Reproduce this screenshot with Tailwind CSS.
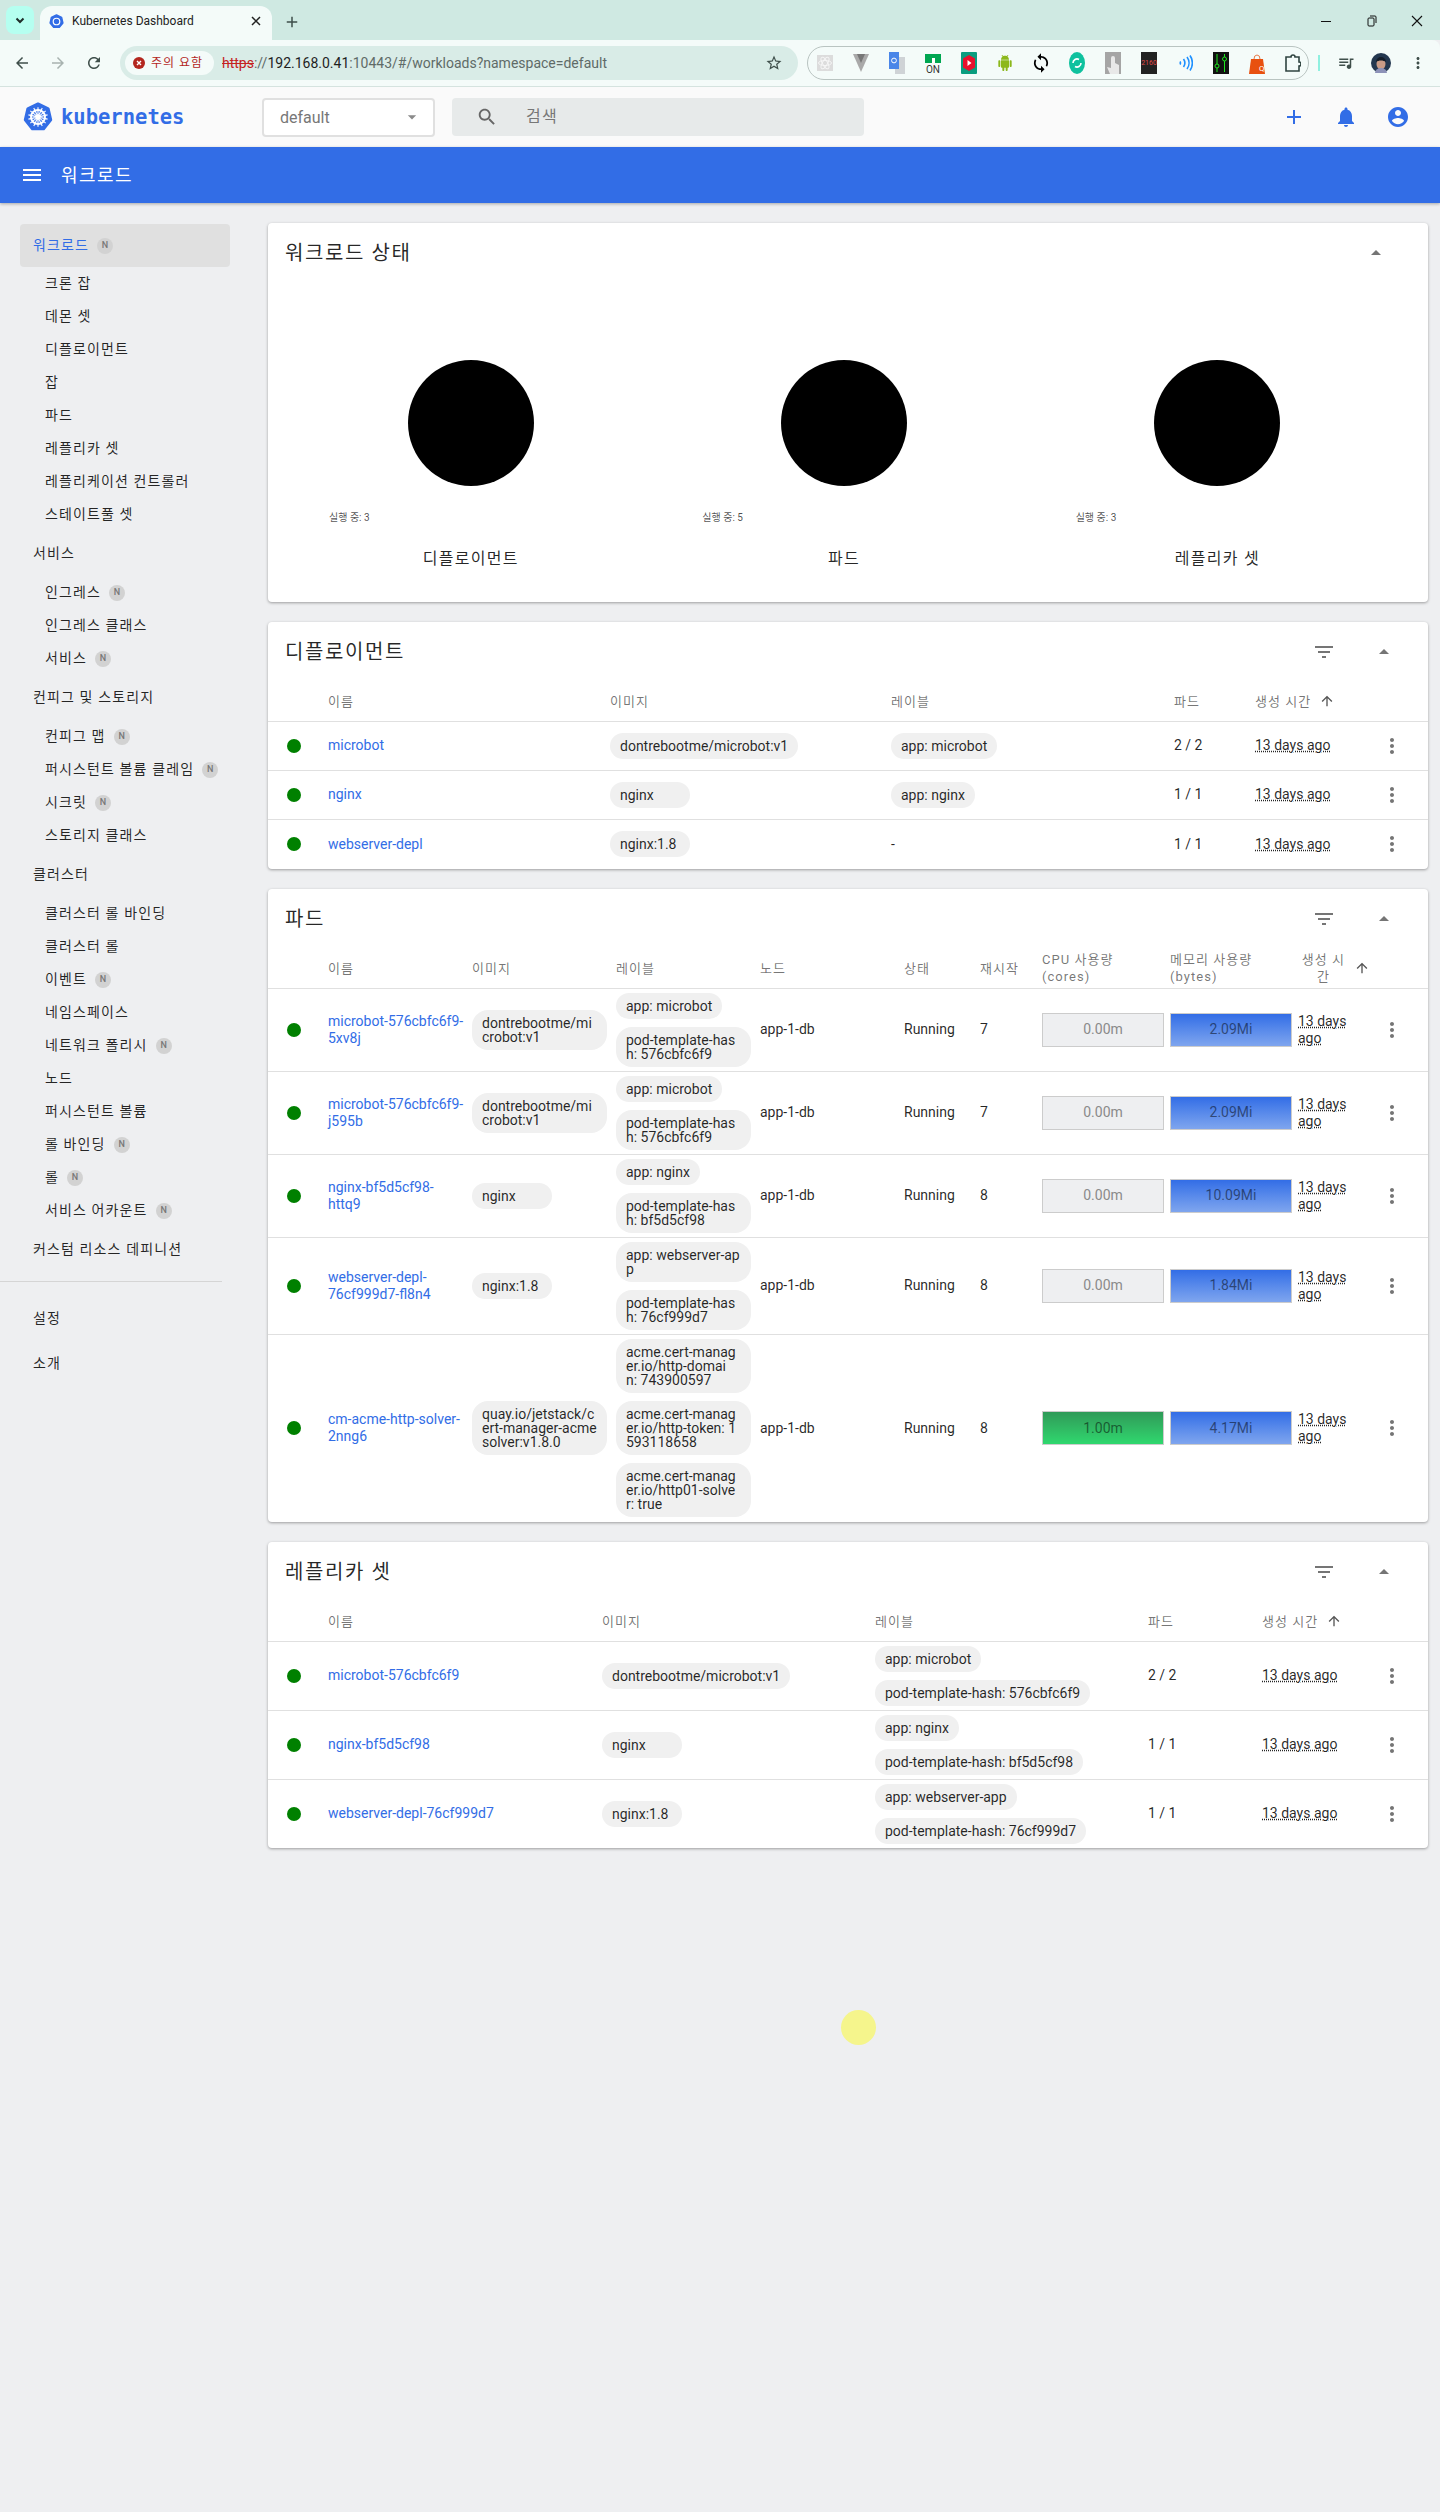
<!DOCTYPE html>
<html lang="ko">
<head>
    <meta charset="UTF-8">
    <title>Kubernetes Dashboard</title>
    <script src="https://cdn.jsdelivr.net/npm/@tailwindcss/browser@4"></script>
</head>
<body class="bg-[#eeeff1] font-[Roboto,'Noto_Sans_CJK_KR',sans-serif] text-[14px] text-black/85">
<div class="relative w-[1440px] h-[2512px] overflow-hidden">

    <!-- browser tab strip -->
    <div class="h-10 bg-[#cfe9e2] flex items-end pl-1.5">
        <div class="w-7 h-7 mb-1.5 rounded-lg bg-[#b5fff0] flex items-center justify-center">
            <svg class="w-3 h-3" viewBox="0 0 24 24" fill="none" stroke="#1f2d2a" stroke-width="4"><path d="M5 9l7 7 7-7"/></svg>
        </div>
        <div class="ml-1.5 w-[232px] h-[34px] bg-[#f4fbf9] rounded-t-xl flex items-center pl-[9px] pb-1">
            <svg class="w-[15px] h-[17px]" viewBox="0 0 32 32"><polygon points="16,2 26.95,7.27 29.65,19.11 22.07,28.61 9.93,28.61 2.35,19.11 5.05,7.27" fill="#326de6" stroke="#326de6" stroke-width="3" stroke-linejoin="round"/><circle cx="16" cy="16" r="7" fill="none" stroke="#fff" stroke-width="2.5"/></svg>
            <span class="ml-2 text-[12px] text-[#222]">Kubernetes Dashboard</span>
            <svg class="w-3 h-3 ml-auto mr-2.5" viewBox="0 0 12 12" stroke="#222" stroke-width="1.5"><path d="M2 2l8 8M10 2l-8 8"/></svg>
        </div>
        <svg class="w-[18px] h-[18px] ml-[11px] mb-[9px]" viewBox="0 0 24 24" fill="#3f4f4b"><path d="M19 13h-6v6h-2v-6H5v-2h6V5h2v6h6v2z"/></svg>
        <div class="ml-auto self-start mt-3.5 flex items-center">
            <svg class="w-3 h-3" viewBox="0 0 12 12" stroke="#111"><path d="M1 6.5h10"/></svg>
            <svg class="w-3 h-3 ml-[34px]" viewBox="0 0 12 12" fill="none" stroke="#111"><rect x="2" y="3" width="6" height="8" rx="1"/><path d="M4 1h5a1 1 0 0 1 1 1v6"/></svg>
            <svg class="w-3.5 h-3.5 ml-[32px] mr-4" viewBox="0 0 14 14" stroke="#111" stroke-width="1.1"><path d="M2 2l10 10M12 2L2 12"/></svg>
        </div>
    </div>

    <!-- browser toolbar -->
    <div class="h-[47px] bg-[#f4fbf9] border-b border-[#d5e3df] rounded-tr-lg flex items-center pl-[13px]">
        <svg class="w-[18px] h-[18px]" viewBox="0 0 24 24" fill="#3f4f4b"><path d="M20 11H7.83l5.59-5.59L12 4l-8 8 8 8 1.41-1.41L7.83 13H20v-2z"/></svg>
        <svg class="w-[18px] h-[18px] ml-[18px]" viewBox="0 0 24 24" fill="#a8b3b0"><path d="M12 4l-1.41 1.41L16.17 11H4v2h12.17l-5.58 5.59L12 20l8-8z"/></svg>
        <svg class="w-[18px] h-[18px] ml-[18px]" viewBox="0 0 24 24" fill="#3f4f4b"><path d="M17.65 6.35C16.2 4.9 14.21 4 12 4c-4.42 0-7.99 3.58-7.99 8s3.57 8 7.99 8c3.73 0 6.84-2.55 7.73-6h-2.08c-.82 2.33-3.04 4-5.65 4-3.31 0-6-2.69-6-6s2.69-6 6-6c1.66 0 3.14.69 4.22 1.78L13 11h7V4l-2.35 2.35z"/></svg>
        <div class="ml-[17px] w-[678px] h-[34px] rounded-full bg-[#d9ece7] flex items-center pl-[5px] pr-[15px]">
            <div class="w-[89px] h-6 rounded-full bg-[#f4fbf9] flex items-center pl-2 shrink-0">
                <svg class="w-3 h-3" viewBox="0 0 12 12"><circle cx="6" cy="6" r="6" fill="#b3261e"/><path d="M4 4l4 4M8 4l-4 4" stroke="#fff" stroke-width="1.4"/></svg>
                <span class="ml-1.5 text-[12px] tracking-[0.08em] text-[#b3261e] whitespace-nowrap">주의 요함</span>
            </div>
            <div class="ml-2 text-[14px] text-[#5f6b68] whitespace-nowrap"><span class="text-[#c5221f] line-through">https</span>://<span class="text-[#1f1f1f]">192.168.0.41</span>:10443/#/workloads?namespace=default</div>
            <svg class="w-[18px] h-[18px] ml-auto" viewBox="0 0 24 24" fill="#3f4f4b"><path d="M22 9.24l-7.19-.62L12 2 9.19 8.63 2 9.24l5.46 4.73L5.82 21 12 17.27 18.18 21l-1.63-7.03L22 9.24zM12 15.4l-3.76 2.27 1-4.28-3.32-2.88 4.38-.38L12 6.1l1.71 4.04 4.38.38-3.32 2.88 1 4.28L12 15.4z"/></svg>
        </div>
        <div class="ml-[9px] w-[502px] h-[34px] rounded-full border border-[#b9c4c1] flex items-center pl-[9px] gap-5">
            <svg class="w-4 h-4" viewBox="0 0 16 16"><rect width="16" height="16" fill="#dcdcdc"/><g fill="none" stroke="#f5f5f5"><ellipse cx="8" cy="8" rx="6.5" ry="2.5"/><ellipse cx="8" cy="8" rx="6.5" ry="2.5" transform="rotate(60 8 8)"/><ellipse cx="8" cy="8" rx="6.5" ry="2.5" transform="rotate(120 8 8)"/></g></svg>
            <svg class="w-4 h-5" viewBox="0 0 16 20"><path d="M0 1h16L8 19z" fill="#a9a9a9"/><path d="M4 1h8L8 10z" fill="#777"/></svg>
            <svg class="w-4 h-[22px]" viewBox="0 0 16 22"><rect x="6" y="5" width="10" height="17" fill="#cfd3d6"/><rect width="10" height="17" fill="#4a86e8"/><circle cx="5" cy="8.5" r="2.4" fill="none" stroke="#fff"/></svg>
            <div class="w-4 h-[22px] relative flex flex-col items-center mt-1">
                <div class="w-4 h-[9px] bg-[#00a651] flex justify-center"><div class="w-[3px] h-[5px] mt-1 bg-white"></div></div>
                <span class="text-[10px] leading-[13px] text-[#333]">ON</span>
            </div>
            <svg class="w-4 h-[22px]" viewBox="0 0 16 22"><rect width="16" height="22" rx="1" fill="#0a9d7f"/><polygon points="8,3 14,6.5 14,15.5 8,19 2,15.5 2,6.5" fill="#e8112d"/><path d="M6.5 8l4 3-4 3z" fill="#fff"/></svg>
            <svg class="w-4 h-[18px]" viewBox="0 0 24 24" fill="#8cb81c"><path d="M6 18c0 .55.45 1 1 1h1v3.5c0 .83.67 1.5 1.5 1.5s1.5-.67 1.5-1.5V19h2v3.5c0 .83.67 1.5 1.5 1.5s1.5-.67 1.5-1.5V19h1c.55 0 1-.45 1-1V8H6v10zM3.5 8C2.67 8 2 8.67 2 9.5v7c0 .83.67 1.5 1.5 1.5S5 17.33 5 16.5v-7C5 8.67 4.33 8 3.5 8zm17 0c-.83 0-1.5.67-1.5 1.5v7c0 .83.67 1.5 1.5 1.5s1.5-.67 1.5-1.5v-7c0-.83-.67-1.5-1.5-1.5zm-4.97-5.84l1.3-1.3c.2-.2.2-.51 0-.71-.2-.2-.51-.2-.71 0l-1.48 1.48C13.85 1.23 12.95 1 12 1c-.96 0-1.86.23-2.66.63L7.85.15c-.2-.2-.51-.2-.71 0-.2.2-.2.51 0 .71l1.31 1.31C6.97 3.26 6 5.01 6 7h12c0-1.99-.97-3.75-2.47-4.84z"/></svg>
            <svg class="w-4 h-[22px]" viewBox="3 0 18 24" fill="#000"><path d="M12 4V1L8 5l4 4V6c3.31 0 6 2.69 6 6 0 1.01-.25 1.97-.7 2.8l1.46 1.46C19.54 15.03 20 13.57 20 12c0-4.42-3.58-8-8-8zm0 14c-3.31 0-6-2.69-6-6 0-1.01.25-1.97.7-2.8L5.24 7.74C4.46 8.97 4 10.43 4 12c0 4.42 3.58 8 8 8v3l4-4-4-4v3z"/></svg>
            <svg class="w-4 h-[22px]" viewBox="0 0 16 22"><ellipse cx="8" cy="11" rx="8" ry="11" fill="#0fc19e"/><path d="M4 11a4 4 0 0 1 6-3.5M12 11a4 4 0 0 1-6 3.5" fill="none" stroke="#fff" stroke-width="1.6"/></svg>
            <svg class="w-4 h-[22px]" viewBox="0 0 16 22"><rect width="16" height="22" fill="#a5a5a5"/><path d="M6 6a2 2 0 0 1 4 0v5l4 2v9H5l-3-7 4 1z" fill="#e8e8e8"/></svg>
            <div class="w-4 h-[22px] bg-[#222] flex items-center justify-center overflow-hidden"><span class="text-[7px] text-[#e04a4a]">2160</span></div>
            <svg class="w-4 h-[18px]" viewBox="0 0 16 18" fill="none" stroke="#1e90ff" stroke-width="1.6"><path d="M3 7.5a3 3 0 0 1 0 3M6.5 5a7 7 0 0 1 0 8M10 3a10 10 0 0 1 0 12M13 1.5a13 13 0 0 1 0 15"/></svg>
            <svg class="w-4 h-[22px]" viewBox="0 0 16 22"><rect width="16" height="22" fill="#111"/><path d="M4 2v18M11.5 2v18" stroke="#1ee61e"/><circle cx="4" cy="14" r="2" fill="#111" stroke="#1ee61e"/><circle cx="11.5" cy="7" r="2" fill="#111" stroke="#1ee61e"/></svg>
            <svg class="w-4 h-[22px]" viewBox="0 0 16 22"><path d="M5 7a3 4 0 0 1 6 0" fill="none" stroke="#e87b4a"/><path d="M2 7h12l2 15H0z" fill="#e8500f"/><text x="10" y="19" font-size="8" fill="#fff">Q</text></svg>
            <svg class="w-4 h-[18px]" viewBox="0 0 16 18" fill="none" stroke="#2f4440" stroke-width="1.6"><path d="M1 3h5a2 2 0 0 1 4 0h4v5a2 2 0 0 1 0 4v5H1z"/></svg>
        </div>
        <div class="ml-[9px] w-[2px] h-4 bg-[#8ff0e0]"></div>
        <svg class="ml-[17px] w-[18px] h-[18px]" viewBox="0 0 24 24" fill="#3f4f4b"><path d="M15 6H3v2h12V6zm0 4H3v2h12v-2zM3 16h8v-2H3v2zM17 6v8.18c-.31-.11-.65-.18-1-.18-1.66 0-3 1.34-3 3s1.34 3 3 3 3-1.34 3-3V8h3V6h-5z"/></svg>
        <svg class="ml-4 w-5 h-5" viewBox="0 0 20 20"><circle cx="10" cy="10" r="10" fill="#23374f"/><ellipse cx="10" cy="11" rx="4.5" ry="5.5" fill="#c99b86"/><path d="M5 9a5 5 0 0 1 10 0c-3-2-7-2-10 0z" fill="#141d29"/><path d="M4 20a6 5 0 0 1 12 0z" fill="#8d92b8"/></svg>
        <svg class="ml-[18px] w-[18px] h-[18px]" viewBox="0 0 24 24" fill="#3f4f4b"><path d="M12 8c1.1 0 2-.9 2-2s-.9-2-2-2-2 .9-2 2 .9 2 2 2zm0 2c-1.1 0-2 .9-2 2s.9 2 2 2 2-.9 2-2-.9-2-2-2zm0 6c-1.1 0-2 .9-2 2s.9 2 2 2 2-.9 2-2-.9-2-2-2z"/></svg>
    </div>

    <!-- dashboard nav -->
    <div class="h-[60px] bg-[#fafafa] flex items-center pl-[23px] pr-[30px]">
        <svg class="w-[30px] h-[30px]" viewBox="0 0 32 32">
            <polygon points="16,2 26.95,7.27 29.65,19.11 22.07,28.61 9.93,28.61 2.35,19.11 5.05,7.27" fill="#326de6" stroke="#326de6" stroke-width="3" stroke-linejoin="round"/>
            <g fill="none" stroke="#fff"><circle cx="16" cy="16" r="7.5" stroke-width="2"/><path d="M16 5.5v21M7.8 9.5l16.4 13M5.8 18.3l20.4-4.6M11.5 25.5l9-19M20.5 25.5l-9-19M26.2 18.3L5.8 13.7M24.2 9.5L7.8 22.5" stroke-width="1.2"/></g>
            <circle cx="16" cy="16" r="2" fill="#fff"/>
        </svg>
        <span class="ml-2 w-[113px] font-['DejaVu_Sans_Mono',monospace] font-bold text-[20.5px] text-[#326de6]">kubernetes</span>
        <div class="ml-[88px] w-[173px] h-[39px] bg-white border-2 border-[#e0e0e0] rounded-sm flex items-center pl-4 pr-[11px] text-[16px] text-[#777]">
            <span class="pt-0.5">default</span>
            <svg class="w-5 h-5 ml-auto" viewBox="0 0 24 24" fill="#8a8a8a"><path d="M7 10l5 5 5-5z"/></svg>
        </div>
        <div class="ml-[17px] w-[412px] h-[38px] bg-[#e7eaea] rounded-sm flex items-center pl-6 text-[16px] text-[#777]">
            <svg class="w-[22px] h-[22px]" viewBox="0 0 24 24" fill="#666"><path d="M15.5 14h-.79l-.28-.27C15.41 12.59 16 11.11 16 9.5 16 5.91 13.09 3 9.5 3S3 5.91 3 9.5 5.91 16 9.5 16c1.61 0 3.09-.59 4.23-1.57l.27.28v.79l5 4.99L20.49 19l-4.99-5zm-6 0C7.01 14 5 11.99 5 9.5S7.01 5 9.5 5 14 7.01 14 9.5 11.99 14 9.5 14z"/></svg>
            <span class="ml-[28px] tracking-[0.08em]">검색</span>
        </div>
        <svg class="w-6 h-6 ml-auto" viewBox="0 0 24 24" fill="#326de6"><path d="M19 13h-6v6h-2v-6H5v-2h6V5h2v6h6v2z"/></svg>
        <svg class="w-6 h-6 ml-7" viewBox="0 0 24 24" fill="#326de6"><path d="M12 22c1.1 0 2-.9 2-2h-4c0 1.1.89 2 2 2zm6-6v-5c0-3.07-1.64-5.64-4.5-6.32V4c0-.83-.67-1.5-1.5-1.5s-1.5.67-1.5 1.5v.68C7.63 5.36 6 7.92 6 11v5l-2 2v1h16v-1l-2-2z"/></svg>
        <svg class="w-6 h-6 ml-7" viewBox="0 0 24 24" fill="#326de6"><path d="M12 2C6.48 2 2 6.48 2 12s4.48 10 10 10 10-4.48 10-10S17.52 2 12 2zm0 3c1.66 0 3 1.34 3 3s-1.34 3-3 3-3-1.34-3-3 1.34-3 3-3zm0 14.2c-2.5 0-4.71-1.28-6-3.22.03-1.99 4-3.08 6-3.08 1.99 0 5.97 1.09 6 3.08-1.29 1.94-3.5 3.22-6 3.22z"/></svg>
    </div>

    <!-- blue title bar -->
    <div class="h-14 bg-[#326de6] flex items-center pl-5 text-white shadow-[0_1px_3px_rgba(0,0,0,.3)]">
        <svg class="w-6 h-6" viewBox="0 0 24 24" fill="#fff"><path d="M3 18h18v-2H3v2zm0-5h18v-2H3v2zm0-7v2h18V6H3z"/></svg>
        <span class="ml-[17px] text-[18px] tracking-[0.08em]">워크로드</span>
    </div>

    <div class="flex">
        <aside class="w-[256px] shrink-0 pt-[21px] text-[14px] tracking-[0.08em]">
            <div id="sidebar"></div>
            <div class="w-[222px] h-px bg-[#d5d5d5] mt-[9px]"></div>
            <div class="mt-3.5 h-[45px] pl-[33px] flex items-center">설정</div>
            <div class="h-[45px] pl-[33px] flex items-center">소개</div>
        </aside>

        <main class="w-[1160px] pt-5 ml-3 flex flex-col gap-5">
            <section class="bg-white rounded shadow-[0_1px_3px_rgba(0,0,0,.35)]">
                <div class="h-[60px] flex items-center pl-[17px] pr-10">
                    <h2 class="text-[20px] tracking-[0.08em]">워크로드 상태</h2>
                    <svg class="w-6 h-6 ml-auto" viewBox="0 0 24 24" fill="#757575"><path d="M7 14l5-5 5 5z"/></svg>
                </div>
                <div id="charts" class="flex pl-4 pr-6 pb-[35px]"></div>
            </section>
            <section id="deployments"></section>
            <section id="pods"></section>
            <section id="replicasets"></section>
        </main>
    </div>

    <!-- mouse highlight -->
    <div class="absolute left-[841px] top-[2010px] w-[35px] h-[35px] rounded-full bg-[#f5f58c]"></div>
</div>

<script>
    const sidebar = [
        ['워크로드', true, [['크론 잡'], ['데몬 셋'], ['디플로이먼트'], ['잡'], ['파드'], ['레플리카 셋'], ['레플리케이션 컨트롤러'], ['스테이트풀 셋']]],
        ['서비스', false, [['인그레스', 1], ['인그레스 클래스'], ['서비스', 1]]],
        ['컨피그 및 스토리지', false, [['컨피그 맵', 1], ['퍼시스턴트 볼륨 클레임', 1], ['시크릿', 1], ['스토리지 클래스']]],
        ['클러스터', false, [['클러스터 롤 바인딩'], ['클러스터 롤'], ['이벤트', 1], ['네임스페이스'], ['네트워크 폴리시', 1], ['노드'], ['퍼시스턴트 볼륨'], ['롤 바인딩', 1], ['롤', 1], ['서비스 어카운트', 1]]],
        ['커스텀 리소스 데피니션', false, []]
    ];

    const badge = '<span class="ml-2 w-4 h-4 rounded-full bg-[#d2d2d2] text-[9px] tracking-normal font-medium text-[#777] flex items-center justify-center">N</span>';

    document.getElementById('sidebar').innerHTML = sidebar.map(([title, active, items], i) => {
        const head = active
            ? `<div class="h-[43px] ml-5 w-[210px] pl-[13px] bg-[#e0e0e0] rounded-sm flex items-center text-[#326de6]">${title}${badge}</div>`
            : `<div class="h-[45px] pl-[33px] flex items-center">${title}</div>`;
        const subs = items.map(([name, n]) => `<div class="h-[33px] pl-[45px] flex items-center">${name}${n ? badge : ''}</div>`).join('');
        return head + subs;
    }).join('');

    document.getElementById('charts').innerHTML = [['실행 중: 3', '디플로이먼트'], ['실행 중: 5', '파드'], ['실행 중: 3', '레플리카 셋']].map(([run, label]) => `
        <div class="flex-1 flex flex-col items-center">
            <div class="mt-[77px] w-[126px] h-[126px] rounded-full bg-black"></div>
            <div class="self-start ml-[45px] mt-[26px] h-3 text-[10px] leading-3 text-black/70">${run}</div>
            <div class="mt-[27px] h-4 text-[16px] leading-4 tracking-[0.08em]">${label}</div>
        </div>`).join('');

    const upArrow = '<svg class="w-4 h-4 ml-[8px] shrink-0" viewBox="0 0 24 24" fill="#555"><path d="M4 12l1.41 1.41L11 7.83V20h2V7.83l5.58 5.59L20 12l-8-8-8 8z"/></svg>';
    const moreIcon = '<svg class="w-6 h-6 ml-auto" viewBox="0 0 24 24" fill="#757575"><path d="M12 8c1.1 0 2-.9 2-2s-.9-2-2-2-2 .9-2 2 .9 2 2 2zm0 2c-1.1 0-2 .9-2 2s.9 2 2 2 2-.9 2-2-.9-2-2-2zm0 6c-1.1 0-2 .9-2 2s.9 2 2 2 2-.9 2-2-.9-2-2-2z"/></svg>';

    const dot = '<div class="ml-[19px] w-3.5 h-3.5 rounded-full bg-[#008000]"></div>';
    const link = t => `<a class="text-[#326de6] leading-[17px] block">${t}</a>`;
    const chip = t => `<div class="w-fit min-w-20 max-w-full box-border px-2.5 py-1.5 rounded-2xl bg-[#f0f0f0] text-[14px] leading-3.5 break-all">${t}</div>`;
    const chips = (list, cls) => `<div class="flex flex-col gap-2 items-start ${cls}">${list.map(chip).join('')}</div>`;
    const age = '<span class="underline decoration-dotted underline-offset-1 leading-[17px] block">13 days ago</span>';
    const more = `<div class="flex pr-6">${moreIcon}</div>`;
    const head = t => `<span class="text-[13px] tracking-[0.08em] text-black/55">${t}</span>`;
    const idleBar = t => `<div class="w-[122px] h-[34px] border border-[#ccc] bg-[#eeeff1] text-[#8a8a8a] flex items-center justify-center">${t}</div>`;
    const memBar = t => `<div class="w-[122px] h-[34px] border border-[#ccc] bg-linear-to-b from-[#326de6] to-[#7fa5ee] text-black/50 flex items-center justify-center">${t}</div>`;
    const cpuBar = t => `<div class="w-[122px] h-[34px] border border-[#ccc] bg-linear-to-b from-[#2f9a58] to-[#2fd86e] text-black/50 flex items-center justify-center">${t}</div>`;

    function card(id, title, cols, heads, rows) {
        document.getElementById(id).className = 'bg-white rounded shadow-[0_1px_3px_rgba(0,0,0,.35)]';
        document.getElementById(id).innerHTML = `
            <div class="h-[60px] flex items-center pl-[17px] pr-8">
                <h2 class="text-[20px] tracking-[0.08em]">${title}</h2>
                <svg class="w-6 h-6 ml-auto" viewBox="0 0 24 24" fill="#757575"><path d="M10 18h4v-2h-4v2zM3 6v2h18V6H3zm3 7h12v-2H6v2z"/></svg>
                <svg class="w-6 h-6 ml-9" viewBox="0 0 24 24" fill="#757575"><path d="M7 14l5-5 5 5z"/></svg>
            </div>
            <table class="w-full table-fixed">
                <colgroup>${cols.map(c => `<col class="${c}">`).join('')}</colgroup>
                <thead><tr class="h-[39px] border-b border-[#e0e0e0] text-left">${heads.map(h => `<th class="p-0 font-normal leading-[17px]">${h}</th>`).join('')}</tr></thead>
                <tbody>${rows}</tbody>
            </table>`;
    }

    const sortHead = `<div class="flex items-center">${head('생성 시간')}${upArrow}</div>`;

    // deployments
    card('deployments', '디플로이먼트',
        ['w-[60px]', 'w-[282px]', 'w-[281px]', 'w-[283px]', 'w-[81px]', 'w-[115px]', 'w-[58px]'],
        ['', head('이름'), head('이미지'), head('레이블'), head('파드'), sortHead, ''],
        [['microbot', 'dontrebootme/microbot:v1', 'app: microbot', '2 / 2'],
         ['nginx', 'nginx', 'app: nginx', '1 / 1'],
         ['webserver-depl', 'nginx:1.8', null, '1 / 1']].map(([name, img, label, pods]) => `
            <tr class="h-[49px] last:h-[50px] border-b border-[#e0e0e0] last:border-b-0">
                <td class="p-0">${dot}</td>
                <td class="p-0">${link(name)}</td>
                <td class="p-0">${chips([img], '')}</td>
                <td class="p-0">${label ? chips([label], '') : '-'}</td>
                <td class="p-0">${pods}</td>
                <td class="p-0">${age}</td>
                <td class="p-0">${more}</td>
            </tr>`).join(''));

    // pods
    card('pods', '파드',
        ['w-[60px]', 'w-[144px]', 'w-[144px]', 'w-[144px]', 'w-[144px]', 'w-[76px]', 'w-[62px]', 'w-[128px]', 'w-[128px]', 'w-[72px]', 'w-[58px]'],
        ['', head('이름'), head('이미지'), head('레이블'), head('노드'), head('상태'), head('재시작'),
         head('CPU 사용량<br>(cores)'), head('메모리 사용량<br>(bytes)'),
         `<div class="flex items-center"><div class="w-[52px] text-center">${head('생성 시간')}</div><div class="-ml-[3px]">${upArrow}</div></div>`, ''],
        [['microbot-576cbfc6f9-<br>5xv8j', 'dontrebootme/microbot:v1', ['app: microbot', 'pod-template-hash: 576cbfc6f9'], '7', idleBar('0.00m'), memBar('2.09Mi')],
         ['microbot-576cbfc6f9-<br>j595b', 'dontrebootme/microbot:v1', ['app: microbot', 'pod-template-hash: 576cbfc6f9'], '7', idleBar('0.00m'), memBar('2.09Mi')],
         ['nginx-bf5d5cf98-<br>httq9', 'nginx', ['app: nginx', 'pod-template-hash: bf5d5cf98'], '8', idleBar('0.00m'), memBar('10.09Mi')],
         ['webserver-depl-<br>76cf999d7-fl8n4', 'nginx:1.8', ['app: webserver-app', 'pod-template-hash: 76cf999d7'], '8', idleBar('0.00m'), memBar('1.84Mi')],
         ['cm-acme-http-solver-<br>2nng6', 'quay.io/jetstack/cert-manager-acme<wbr>solver:v1.8.0', ['acme.cert-manager.io/http-domai<br>n: 743900597', 'acme.cert-manager.io/http-token: 1593118658', 'acme.cert-manager.io/http01-solver: true'], '8', cpuBar('1.00m'), memBar('4.17Mi')]
        ].map(([name, img, labels, restarts, cpu, mem]) => `
            <tr class="last:h-[188px] border-b border-[#e0e0e0] last:border-b-0">
                <td class="p-0">${dot}</td>
                <td class="p-0">${link(name)}</td>
                <td class="p-0">${chips([img], 'w-[135px]')}</td>
                <td class="py-1 px-0">${chips(labels, 'w-[135px]')}</td>
                <td class="p-0">app-1-db</td>
                <td class="p-0">Running</td>
                <td class="p-0">${restarts}</td>
                <td class="p-0">${cpu}</td>
                <td class="p-0">${mem}</td>
                <td class="p-0">${age}</td>
                <td class="p-0">${more}</td>
            </tr>`).join(''));

    // replica sets
    card('replicasets', '레플리카 셋',
        ['w-[60px]', 'w-[274px]', 'w-[273px]', 'w-[273px]', 'w-[114px]', 'w-[114px]', 'w-[52px]'],
        ['', head('이름'), head('이미지'), head('레이블'), head('파드'), sortHead, ''],
        [['microbot-576cbfc6f9', 'dontrebootme/microbot:v1', ['app: microbot', 'pod-template-hash: 576cbfc6f9'], '2 / 2'],
         ['nginx-bf5d5cf98', 'nginx', ['app: nginx', 'pod-template-hash: bf5d5cf98'], '1 / 1'],
         ['webserver-depl-76cf999d7', 'nginx:1.8', ['app: webserver-app', 'pod-template-hash: 76cf999d7'], '1 / 1']
        ].map(([name, img, labels, pods]) => `
            <tr class="border-b border-[#e0e0e0] last:border-b-0">
                <td class="p-0">${dot}</td>
                <td class="p-0">${link(name)}</td>
                <td class="p-0">${chips([img], '')}</td>
                <td class="py-1 px-0">${chips(labels, '')}</td>
                <td class="p-0">${pods}</td>
                <td class="p-0">${age}</td>
                <td class="p-0">${more}</td>
            </tr>`).join(''));
</script>
</body>
</html>
